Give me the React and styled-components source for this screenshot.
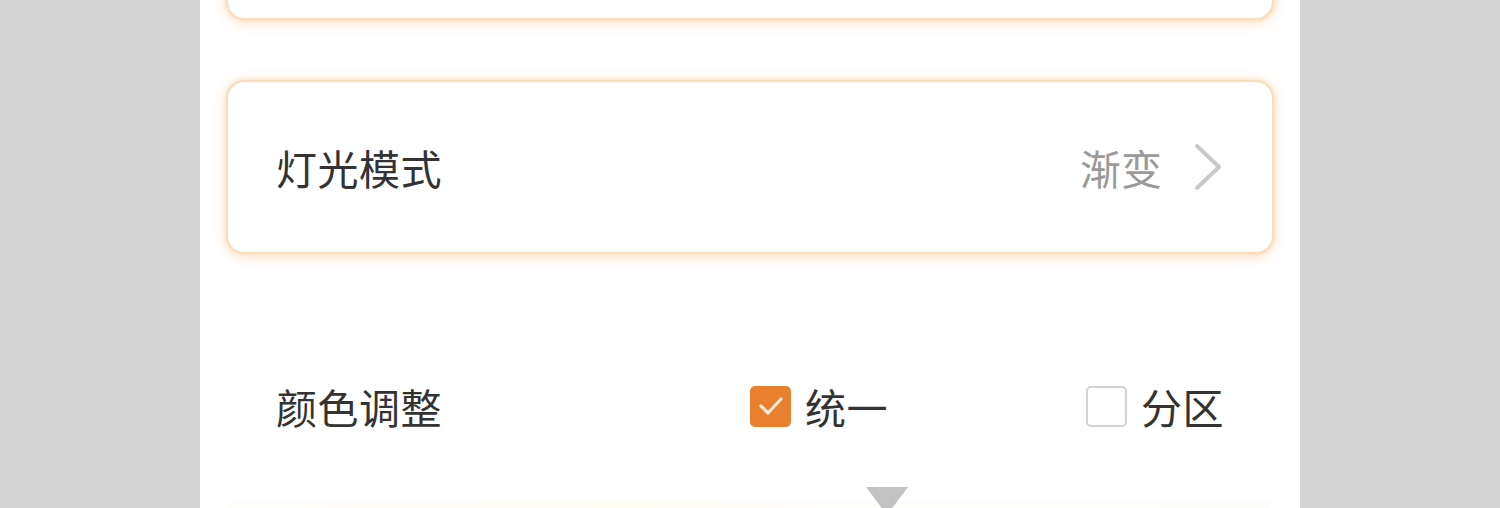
import React from "react";
import styled, { createGlobalStyle } from "styled-components";

const Global = createGlobalStyle`
  html, body { margin: 0; padding: 0; background: #d5d5d5; }
  body { font-family: "Noto Sans CJK SC", "Noto Sans", sans-serif; }
  #root { height: 508px; overflow: hidden; }
`;

const Panel = styled.div`
  width: 1100px;
  height: 508px;
  margin: 0 auto;
  background: #ffffff;
  overflow: hidden;
  display: flex;
  flex-direction: column;
  box-sizing: border-box;
  padding: 0 26px;
`;

const Card = styled.div`
  box-sizing: border-box;
  height: 174px;
  flex: none;
  margin-top: ${(p) => p.$offset}px;
  border-radius: 18px;
  border: 2px solid #fcdcb9;
  background: #ffffff;
  box-shadow: 0 2px 14px rgba(246, 175, 105, 0.38), 0 0 4px rgba(246, 175, 105, 0.3);
  display: flex;
  align-items: center;
  justify-content: space-between;
  padding: 0 48px;
`;

const Label = styled.span`
  font-size: 41px;
  line-height: 1;
  color: #333333;
  letter-spacing: 0.5px;
`;

const Value = styled.div`
  display: flex;
  align-items: center;
  gap: 30px;
  font-size: 41px;
  line-height: 1;
  color: #9a9a9a;
`;

const Row = styled.div`
  margin-top: 122px;
  height: 60px;
  flex: none;
  display: flex;
  align-items: center;
  padding: 0 50px;
`;

const RowLabel = styled(Label)`
  flex: 1;
`;

const Options = styled.div`
  width: 474px;
  display: flex;
  justify-content: space-between;
  align-items: center;
`;

const Option = styled.div`
  display: flex;
  align-items: center;
  gap: 14px;
`;

const Box = styled.div`
  box-sizing: border-box;
  width: 41px;
  height: 41px;
  border-radius: 5px;
  display: flex;
  align-items: center;
  justify-content: center;
  background: ${(p) => (p.$checked ? "#e8802e" : "#ffffff")};
  border: 2px solid ${(p) => (p.$checked ? "#e8802e" : "#d3d3d3")};
`;

const Slider = styled.div`
  margin-top: 51px;
  flex: none;
  position: relative;
  height: 40px;
`;

const Pointer = styled.div`
  position: absolute;
  left: 640px;
  top: 0;
  width: 0;
  height: 0;
  border-left: 21px solid transparent;
  border-right: 21px solid transparent;
  border-top: 28px solid #c2c2c2;
`;

const Track = styled.div`
  margin: 14px 4px 0;
  height: 30px;
  background: linear-gradient(90deg, #fdfdfa, #fdfcf3 40%, #fdfdfb 60%, #fcfcfa);
`;

const Chevron = () => (
  <svg width="32" height="50" viewBox="0 0 32 50" fill="none">
    <path d="M5 4 L27 25 L5 46" stroke="#c9c9c9" strokeWidth="4" strokeLinecap="round" strokeLinejoin="round" />
  </svg>
);

const Check = () => (
  <svg width="26" height="22" viewBox="0 0 26 22" fill="none">
    <path d="M3 11 L10 18 L23 4" stroke="#fde9d2" strokeWidth="3.2" strokeLinecap="round" strokeLinejoin="round" />
  </svg>
);

export default function App() {
  return (
    <>
      <Global />
      <Panel>
        <Card $offset={-154} />
        <Card $offset={60}>
          <Label>灯光模式</Label>
          <Value>
            <span>渐变</span>
            <Chevron />
          </Value>
        </Card>
        <Row>
          <RowLabel>颜色调整</RowLabel>
          <Options>
            <Option>
              <Box $checked>
                <Check />
              </Box>
              <Label>统一</Label>
            </Option>
            <Option>
              <Box />
              <Label>分区</Label>
            </Option>
          </Options>
        </Row>
        <Slider>
          <Track />
          <Pointer />
        </Slider>
      </Panel>
    </>
  );
}
